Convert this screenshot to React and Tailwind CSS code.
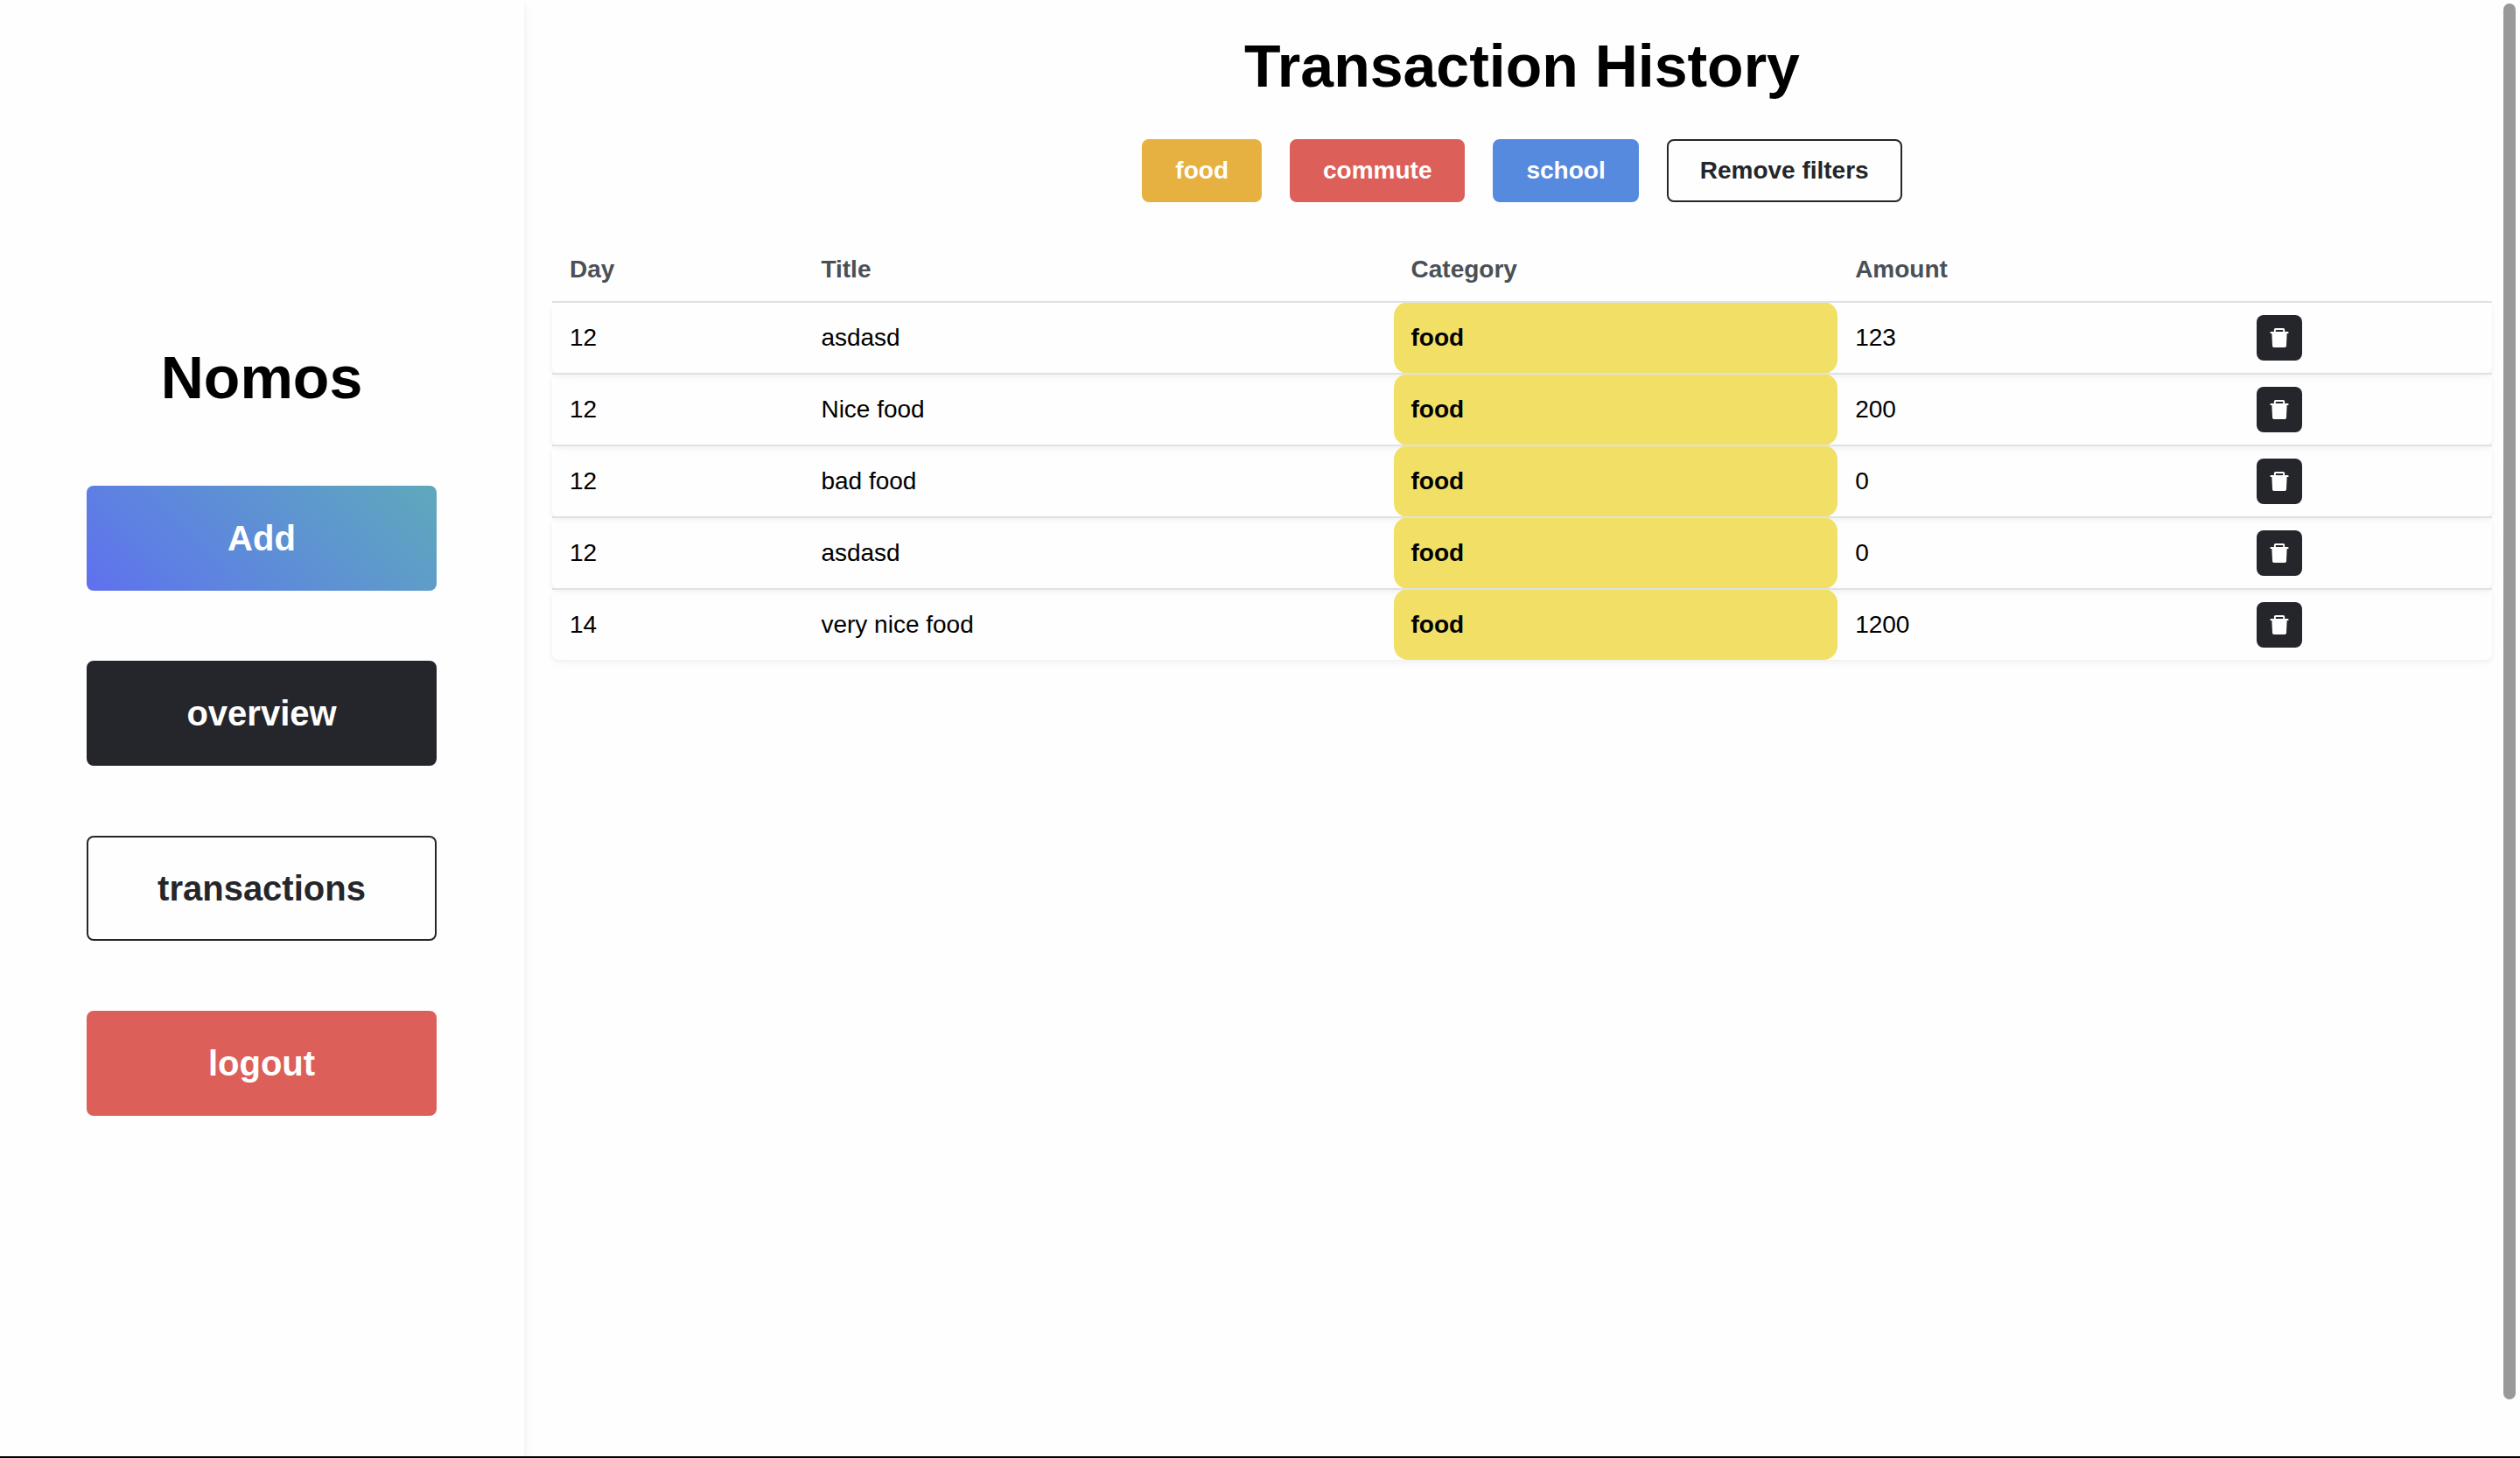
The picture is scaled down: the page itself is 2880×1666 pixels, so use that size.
import React from "react";
import { AiFillDelete } from "react-icons/ai";

const transactions = [
  { id: 1, day: 12, title: "asdasd", category: "food", amount: 123 },
  { id: 2, day: 12, title: "Nice food", category: "food", amount: 200 },
  { id: 3, day: 12, title: "bad food", category: "food", amount: 0 },
  { id: 4, day: 12, title: "asdasd", category: "food", amount: 0 },
  { id: 5, day: 14, title: "very nice food", category: "food", amount: 1200 },
];

const navItems = [
  { label: "Add", style: "border-transparent bg-linear-45 from-[#5f70ee] to-[#5fa8bb] bg-origin-border text-white" },
  { label: "overview", style: "border-[#25262b] bg-[#25262b] text-white" },
  { label: "transactions", style: "border-[#25262b] bg-[#fefefe] text-[#25262b]" },
  { label: "logout", style: "border-[#dc5f5a] bg-[#dc5f5a] text-white" },
];

const filters = [
  { label: "food", style: "border-[#e7b142] bg-[#e7b142] text-white" },
  { label: "commute", style: "border-[#dc5f5a] bg-[#dc5f5a] text-white" },
  { label: "school", style: "border-[#568ade] bg-[#568ade] text-white" },
  { label: "Remove filters", style: "border-[#25262b] bg-[#fefefe] text-[#25262b]" },
];

function Sidebar() {
  return (
    <aside className="flex w-[599px] shrink-0 flex-col justify-center gap-20 bg-[#fefefe] pr-[100px] pb-0.5 pl-[99px] shadow-[0_2px_6px_rgba(0,0,0,0.05),0_10px_20px_rgba(0,0,0,0.04)]">
      <h1 className="text-center text-[68px] leading-[88px] font-bold">Nomos</h1>
      {navItems.map((item) => (
        <button
          key={item.label}
          type="button"
          className={`h-[120px] rounded-lg border-2 text-[40px] leading-none font-semibold ${item.style}`}
        >
          {item.label}
        </button>
      ))}
    </aside>
  );
}

function TransactionTable() {
  return (
    <table className="w-full border-collapse text-[28px] leading-[44px]">
      <thead>
        <tr className="text-left text-[#495057]">
          <th className="px-5 py-3.5 font-bold">Day</th>
          <th className="px-5 py-3.5 font-bold">Title</th>
          <th className="px-5 py-3.5 font-bold">Category</th>
          <th className="px-5 py-3.5 font-bold">Amount</th>
          <td />
        </tr>
      </thead>
      <tbody>
        {transactions.map((t) => (
          <tr key={t.id} className="rounded-lg border-t-2 border-[#dee2e6] shadow-[0_2px_6px_rgba(0,0,0,0.05),0_6px_12px_rgba(0,0,0,0.02)]">
            <td className="px-5">{t.day}</td>
            <td className="px-5">{t.title}</td>
            <td className="rounded-2xl bg-[#f2e066] px-5 font-bold">{t.category}</td>
            <td className="px-5">{t.amount}</td>
            <td className="px-5 py-3.5">
              <button
                type="button"
                aria-label="Delete transaction"
                className="flex size-[52px] items-center justify-center rounded-lg bg-[#25262b] text-white"
              >
                <AiFillDelete size={28} />
              </button>
            </td>
          </tr>
        ))}
      </tbody>
    </table>
  );
}

export default function App() {
  return (
    <div className="relative flex min-h-screen border-b-2 border-black bg-[#fefefe] font-['Liberation_Sans',Arial,sans-serif] text-black">
      <Sidebar />
      <main className="flex-1 p-8">
        <h1 className="text-center text-[68px] leading-[86px] font-bold">Transaction History</h1>
        <div className="mt-[41px] mb-[41px] flex justify-center gap-8">
          {filters.map((f) => (
            <button
              key={f.label}
              type="button"
              className={`h-[72px] rounded-lg border-2 px-9 text-[28px] leading-none font-semibold ${f.style}`}
            >
              {f.label}
            </button>
          ))}
        </div>
        <TransactionTable />
      </main>
      <div className="absolute top-1 right-[5px] bottom-[65px] w-3.5 rounded-full bg-[#999999]" />
    </div>
  );
}
